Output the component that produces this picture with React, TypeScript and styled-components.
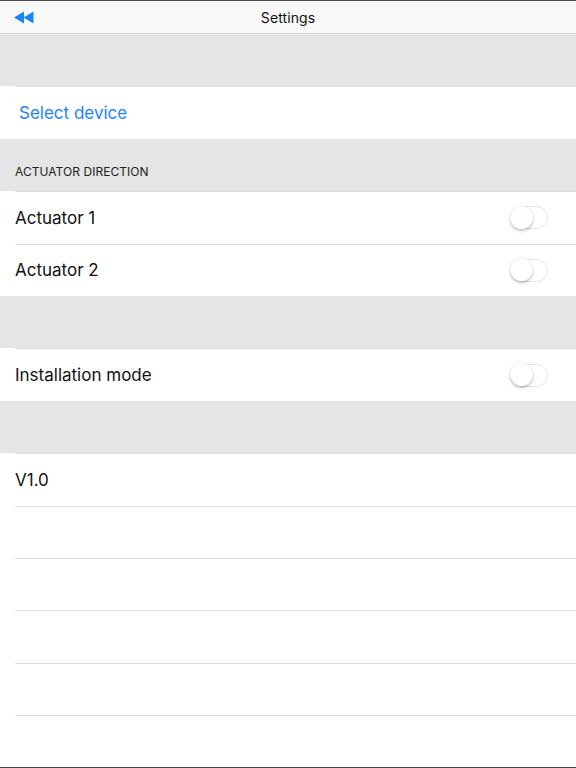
import React from "react";
import styled, { createGlobalStyle } from "styled-components";

const Global = createGlobalStyle`
  html, body { margin: 0; padding: 0; background: #ffffff; }
  body { font-family: Inter, "Liberation Sans", Arial, sans-serif; -webkit-font-smoothing: antialiased; }
`;

const Page = styled.div`
  width: 576px;
  height: 768px;
  box-sizing: border-box;
  border-top: 1px solid #4a4a4a;
  border-bottom: 1px solid #4a4a4a;
  display: flex;
  flex-direction: column;
  overflow: hidden;
  background: #ffffff;
`;

const NavBar = styled.div`
  height: 33px;
  flex: none;
  box-sizing: border-box;
  background: #f8f8f8;
  border-bottom: 1px solid #d6d6d6;
  display: grid;
  grid-template-columns: 60px 1fr 60px;
  align-items: center;
`;

const BackButton = styled.div`
  display: flex;
  align-items: center;
  padding-left: 14px;
  height: 100%;
`;

const Title = styled.div`
  text-align: center;
  font-size: 14px;
  color: #111;
  letter-spacing: 0.1px;
`;

const Group = styled.div`
  height: 52.4px;
  flex: none;
  box-sizing: border-box;
  background: #e5e5e5;
  display: flex;
  align-items: flex-end;
  padding: 0 0 12px 15px;
  font-size: 12px;
  color: #222;
  letter-spacing: 0.05px;
`;

const Row = styled.div`
  height: 52.4px;
  flex: none;
  box-sizing: border-box;
  background: #ffffff;
  margin-left: 15px;
  padding-right: 28px;
  border-top: 1px solid #dcdcdc;
  display: flex;
  align-items: center;
  justify-content: space-between;
  font-size: 17px;
  color: #111;
`;

const LinkText = styled.span`
  color: #1a84fb;
  padding-left: 4px;
`;

const Track = styled.div`
  width: 38px;
  height: 23px;
  box-sizing: border-box;
  border-radius: 12px;
  border: 1.5px solid #e4e4e4;
  background: #ffffff;
  position: relative;
`;

const Knob = styled.div`
  position: absolute;
  left: -1.5px;
  top: -1.5px;
  width: 23px;
  height: 23px;
  border-radius: 50%;
  background: #ffffff;
  box-shadow: 0 2px 3px rgba(0, 0, 0, 0.22), 0 0 0 0.5px rgba(0, 0, 0, 0.08);
`;

const Toggle = () => (
  <Track>
    <Knob />
  </Track>
);

const BackIcon = () => (
  <svg width="20" height="13" viewBox="0 0 20 13">
    <path d="M0 6.5 L10 0.5 L10 12.5 Z" fill="#1a84fb" />
    <path d="M9.5 6.5 L19.5 0.5 L19.5 12.5 Z" fill="#1a84fb" />
  </svg>
);

export default function App() {
  return (
    <>
      <Global />
      <Page>
        <NavBar>
          <BackButton>
            <BackIcon />
          </BackButton>
          <Title>Settings</Title>
          <div />
        </NavBar>
        <Group />
        <Row>
          <LinkText>Select device</LinkText>
        </Row>
        <Group>ACTUATOR DIRECTION</Group>
        <Row>
          Actuator 1
          <Toggle />
        </Row>
        <Row>
          Actuator 2
          <Toggle />
        </Row>
        <Group />
        <Row>
          Installation mode
          <Toggle />
        </Row>
        <Group />
        <Row>V1.0</Row>
        <Row />
        <Row />
        <Row />
        <Row />
        <Row />
      </Page>
    </>
  );
}
